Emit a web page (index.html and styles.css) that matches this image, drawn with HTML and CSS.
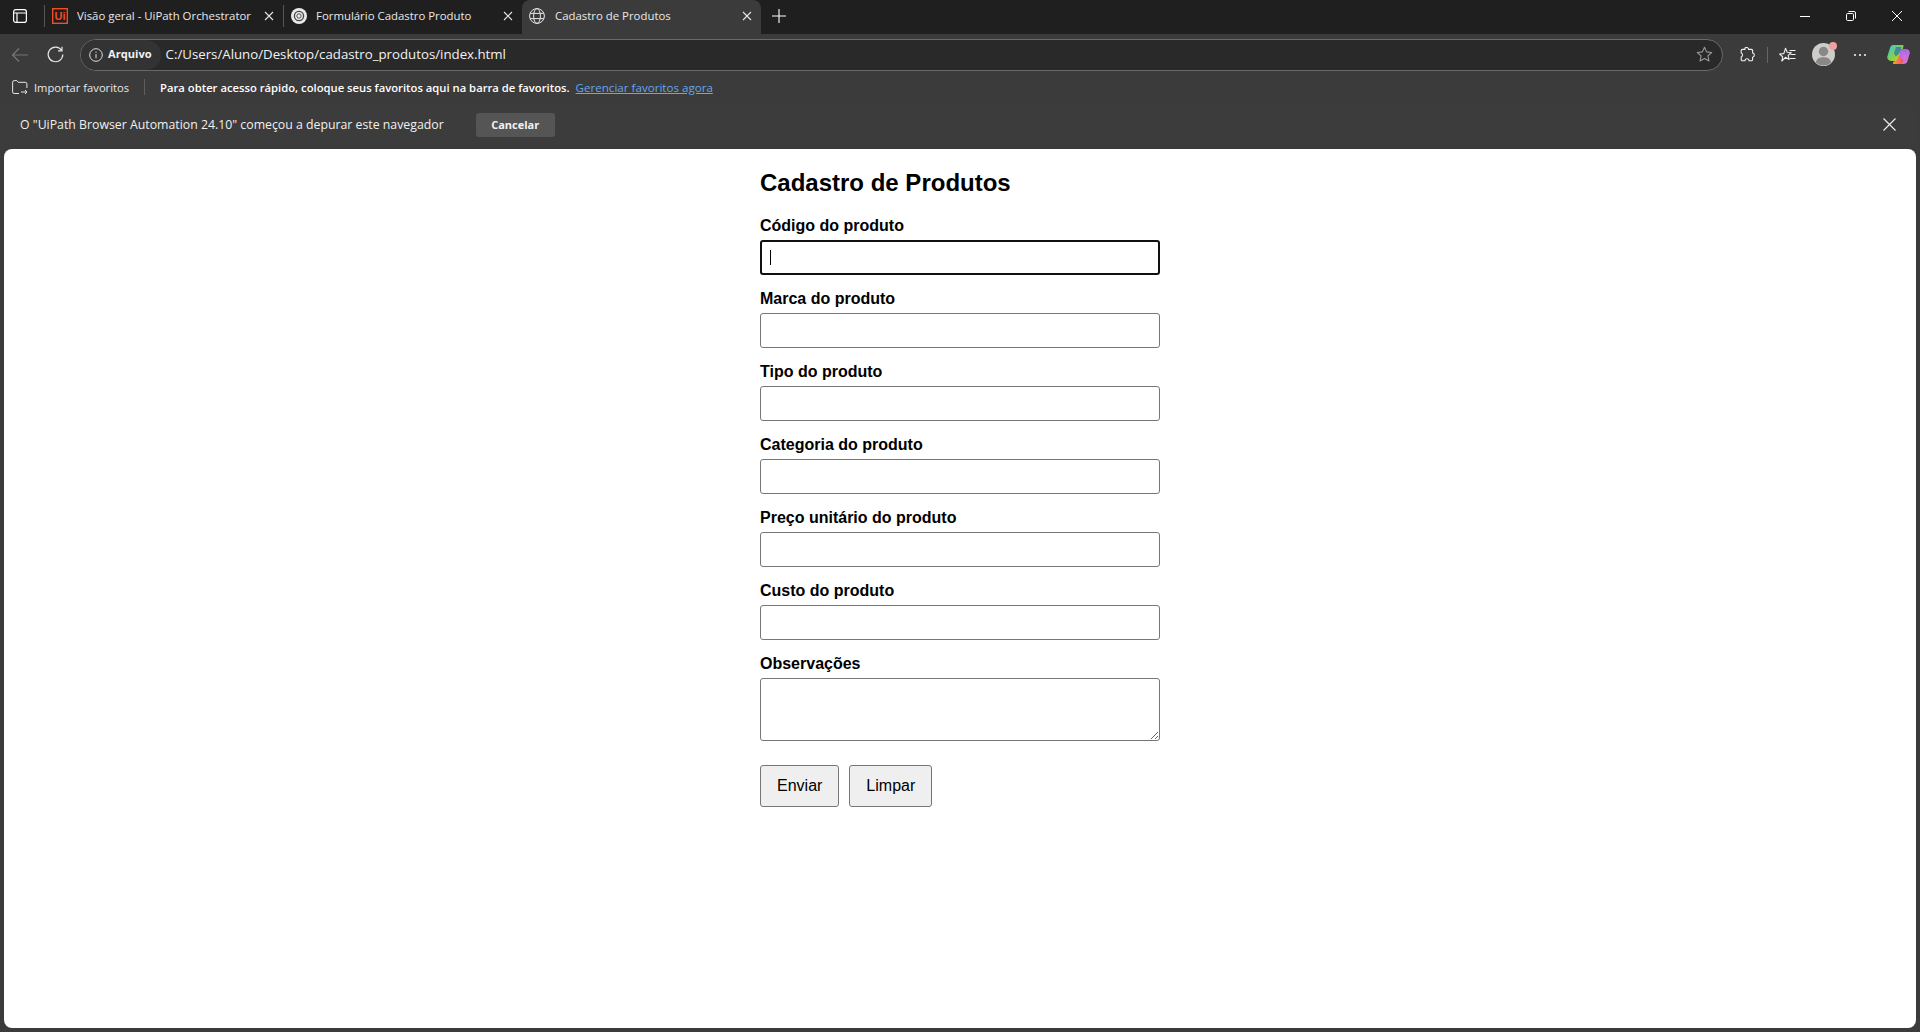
FILE: index.html
```html
<!DOCTYPE html>
<html lang="pt-BR">
<head>
<meta charset="utf-8">
<title>Cadastro de Produtos</title>
<link rel="stylesheet" href="styles.css">
</head>
<body>
<div class="window">
  <header class="tabstrip">
    <div class="strip-btn">
      <svg width="16" height="16" viewBox="0 0 16 16" fill="none" stroke="#fff" stroke-width="1.2"><rect x="1.6" y="1.6" width="12.8" height="12.8" rx="2.2"/><path d="M1.6 5h12.8M5 5v9.4" /></svg>
    </div>
    <div class="tab sep">
      <svg class="fav" width="16" height="16" viewBox="0 0 16 16"><rect x=".7" y=".7" width="14.6" height="14.6" fill="none" stroke="#f04e23" stroke-width="1.4"/><text class="ui-mark" x="8" y="12" text-anchor="middle">Ui</text></svg>
      <span class="tab-title">Visão geral - UiPath Orchestrator</span>
      <svg class="tab-x" width="10" height="10" viewBox="0 0 10 10" stroke="#e6e6e6" stroke-width="1.1"><path d="M1 1l8 8M9 1l-8 8"/></svg>
    </div>
    <div class="tab sep">
      <svg class="fav" width="16" height="16" viewBox="0 0 16 16"><circle cx="8" cy="8" r="8" fill="#e9e9e9"/><circle cx="8" cy="8" r="4.6" fill="none" stroke="#444" stroke-width="1.3"/><circle cx="8" cy="8" r="2.2" fill="none" stroke="#555" stroke-width="1"/></svg>
      <span class="tab-title">Formulário Cadastro Produto</span>
      <svg class="tab-x" width="10" height="10" viewBox="0 0 10 10" stroke="#e6e6e6" stroke-width="1.1"><path d="M1 1l8 8M9 1l-8 8"/></svg>
    </div>
    <div class="tab active">
      <svg class="fav" width="16" height="16" viewBox="0 0 16 16" fill="none" stroke="#e6e6e6" stroke-width="1"><circle cx="8" cy="8" r="7.4"/><ellipse cx="8" cy="8" rx="3.4" ry="7.4"/><path d="M1.2 5.4h13.6M1.2 10.6h13.6"/></svg>
      <span class="tab-title">Cadastro de Produtos</span>
      <svg class="tab-x" width="10" height="10" viewBox="0 0 10 10" stroke="#e6e6e6" stroke-width="1.1"><path d="M1 1l8 8M9 1l-8 8"/></svg>
    </div>
    <div class="new-tab">
      <svg width="14" height="14" viewBox="0 0 14 14" stroke="#fff" stroke-width="1.1"><path d="M7 0v14M0 7h14"/></svg>
    </div>
    <div class="win-controls">
      <svg width="10" height="10" viewBox="0 0 10 10" stroke="#fff" stroke-width="1"><path d="M0 5.5h10"/></svg>
      <svg width="10" height="10" viewBox="0 0 10 10" fill="none" stroke="#fff" stroke-width="1"><rect x=".5" y="2.5" width="7" height="7" rx="1.2"/><path d="M2.5 .5h5.5a1.5 1.5 0 0 1 1.5 1.5v5.5"/></svg>
      <svg width="10" height="10" viewBox="0 0 10 10" stroke="#fff" stroke-width="1"><path d="M0 0l10 10M10 0L0 10"/></svg>
    </div>
  </header>

  <nav class="toolbar">
    <div class="nav-btn back">
      <svg width="18" height="16" viewBox="0 0 18 16" fill="none" stroke="#777" stroke-width="1.2"><path d="M17 8H1.5M8 1.5L1.5 8 8 14.5"/></svg>
    </div>
    <div class="nav-btn reload">
      <svg width="17" height="17" viewBox="0 0 17 17" fill="none" stroke="#e8e8e8" stroke-width="1.2"><path d="M14.6 4.4A7.3 7.3 0 1 0 15.8 8.5"/><path d="M15 .8v4h-4"/></svg>
    </div>
    <div class="address">
      <div class="site-chip">
        <svg width="14" height="14" viewBox="0 0 14 14" fill="none" stroke="#ddd" stroke-width="1"><circle cx="7" cy="7" r="6.3"/><path d="M7 6v4.2M7 3.600v1.200"/></svg>
        <span class="chip-text">Arquivo</span>
      </div>
      <span class="url">C:/Users/Aluno/Desktop/cadastro_produtos/index.html</span>
      <svg class="addr-star" width="17" height="17" viewBox="0 0 17 17" fill="none" stroke="#9a9a9a" stroke-width="1.1" stroke-linejoin="round"><path d="M8.5 1.2l2.1 4.7 5.1.6-3.8 3.4 1.1 5.1-4.5-2.6L4 15l1.1-5.1L1.3 6.500l5.100-.6z"/></svg>
    </div>
    <div class="tool-icons">
      <svg class="ti-ext" width="16" height="16" viewBox="0 0 16 16" fill="none" stroke="#f0f0f0" stroke-width="1.1" stroke-linejoin="round"><path d="M6 1.200a2 2 0 0 1 3.600 1.200h2.800a1.200 1.200 0 0 1 1.200 1.200v2.300a2.200 2.200 0 0 1 0 4.300v2.400a1.200 1.200 0 0 1-1.200 1.200H10a2 2 0 0 0-4 0H3.400a1.200 1.200 0 0 1-1.200-1.200v-2.700a2 2 0 0 0 0-3.800V3.600A1.200 1.200 0 0 1 3.400 2.400H6z"/></svg>
      <span class="ti-sep"></span>
      <svg class="ti-fav" width="17" height="16" viewBox="0 0 17 16" fill="none" stroke="#f0f0f0" stroke-width="1.1" stroke-linejoin="round"><path d="M6.500 1.300l1.700 3.900 4 .3-3 2.800.9 4.200-3.600-2.200L2.800 14l.9-4.200L.6 7l4.200-.4z"/><path d="M10.500 3.500h6M11.500 7.500h5M10.800 11.500h5.700"/></svg>
      <div class="avatar">
        <svg width="23" height="23" viewBox="0 0 23 23"><circle cx="11.500" cy="11.500" r="11.500" fill="#cfcdca"/><circle cx="11.500" cy="8.500" r="4.700" fill="#8a8886"/><path d="M3.800 19.500c1-4 4-5.200 7.700-5.200s6.700 1.200 7.700 5.200a11.500 11.500 0 0 1-15.400 0z" fill="#8a8886"/></svg>
        <span class="avatar-dot"></span>
      </div>
      <svg class="ti-more" width="14" height="4" viewBox="0 0 14 4" fill="#eee"><circle cx="2" cy="2" r="1.100"/><circle cx="7" cy="2" r="1.100"/><circle cx="12" cy="2" r="1.100"/></svg>
      <svg class="ti-copilot" width="23" height="21" viewBox="0 0 23 21">
        <defs>
          <linearGradient id="cpa" x1="0" y1="0" x2="1" y2="1"><stop offset="0" stop-color="#2fc4e8"/><stop offset=".55" stop-color="#86d24a"/><stop offset="1" stop-color="#f5c02c"/></linearGradient>
          <linearGradient id="cpb" x1="0" y1="0" x2="1" y2="1"><stop offset="0" stop-color="#7a6cf0"/><stop offset=".6" stop-color="#c86be0"/><stop offset="1" stop-color="#f083b8"/></linearGradient>
          <linearGradient id="cpc" x1="0" y1="0" x2="1" y2="0"><stop offset="0" stop-color="#f9a52c"/><stop offset="1" stop-color="#ee4d6a"/></linearGradient>
        </defs>
        <path d="M6 1h9.500c1.500 0 1 1.500.5 3L13 15c-.5 1.500-1.500 2-3 2H4.500C1.500 17-.5 14.500.5 12L3 4c.5-2 1.500-3 3-3z" fill="url(#cpa)"/>
        <path d="M13 5h5.500c3 0 5 2 4 5l-2 7c-.5 2-2 3-4 3h-3c2 0 2.500-1 3-3l1-4c.5-3-1-5-4.500-8z" fill="url(#cpb)"/>
        <path d="M13.500 5.500c2.500 1 5 2.500 5 5.500 0 2-1 5-2 7.500-.5 1-1.500 1.500-2.500 1.500H7c-1.500 0-1-1.500 0-2 3 0 4-1 4.500-3z" fill="url(#cpb)"/>
        <path d="M11.800 12c-.5 3-2.300 5-5.300 5.800-.8.700-.5 2.200.5 2.200h6.500c1 0 1.500-.5 2-1.500.5-1 1-2.500 1-2.500z" fill="url(#cpc)"/>
        <path d="M9 3h5.500l-1 3.500C12 10 11 11 8.500 12.500L7 9z" fill="#1d4fc0" opacity=".55"/>
      </svg>
    </div>
  </nav>

  <div class="favbar">
    <svg class="fav-import" width="16" height="15" viewBox="0 0 16 15" fill="none" stroke="#e6e6e6" stroke-width="1"><path d="M7 13.500H2.200a1.600 1.600 0 0 1-1.600-1.600V2.200A1.600 1.600 0 0 1 2.200.6h2.600l1.500 1.700h7a1.600 1.600 0 0 1 1.600 1.600V8"/><path d="M9 12h6M13 10l2 2-2 2"/></svg>
    <span class="fav-import-text">Importar favoritos</span>
    <span class="fav-sep"></span>
    <strong class="fav-msg">Para obter acesso rápido, coloque seus favoritos aqui na barra de favoritos.</strong>
    <a class="fav-link" href="#">Gerenciar favoritos agora</a>
  </div>

  <div class="infobar">
    <span class="info-msg">O "UiPath Browser Automation 24.10" começou a depurar este navegador</span>
    <button class="info-cancel" type="button">Cancelar</button>
    <svg class="info-x" width="13" height="13" viewBox="0 0 13 13" stroke="#f0f0f0" stroke-width="1.100"><path d="M.5.500l12 12M12.500.500l-12 12"/></svg>
  </div>

  <main class="page">
    <form class="form">
      <h1>Cadastro de Produtos</h1>
      <label class="field-label">Código do produto</label>
      <div class="focus-wrap">
        <input class="field focused" type="text">
        <span class="caret"></span>
      </div>
      <label class="field-label">Marca do produto</label>
      <input class="field" type="text">
      <label class="field-label">Tipo do produto</label>
      <input class="field" type="text">
      <label class="field-label">Categoria do produto</label>
      <input class="field" type="text">
      <label class="field-label">Preço unitário do produto</label>
      <input class="field" type="text">
      <label class="field-label">Custo do produto</label>
      <input class="field" type="text">
      <label class="field-label">Observações</label>
      <textarea class="field area"></textarea>
      <div class="actions">
        <button class="btn" type="button">Enviar</button>
        <button class="btn" type="button">Limpar</button>
      </div>
    </form>
  </main>
</div>
</body>
</html>
```

FILE: styles.css
```css
* { box-sizing: border-box; }
html, body { margin: 0; height: 100%; }
body {
  background: #3b3b3b;
  font-family: "Open Sans", "Noto Sans", "Liberation Sans", sans-serif;
  color: #fff;
  overflow: hidden;
}
.window { height: 1032px; display: flex; flex-direction: column; }

/* Tab strip */
.tabstrip { height: 34px; background: #1f1f1f; display: flex; align-items: stretch; flex: none; }
.strip-btn { width: 44px; display: flex; align-items: center; justify-content: center; padding-right: 5px; padding-bottom: 2px; }
.tab { width: 239px; display: flex; align-items: center; padding: 0 7px 0 7px; position: relative; font-size: 12px; color: #e8e8e8; }
.tab.sep { border-left: 1px solid #555; margin: 5px 0; height: 22px; align-self: flex-start; }
.tab.active { background: #3b3b3b; border-radius: 8px 8px 0 0; margin-top: 0; padding-left: 7px; padding-bottom: 2px; }
.fav { flex: none; }
.ui-mark { font: 700 11px "Liberation Sans", Arial, sans-serif; fill: #f04e23; }
.tab-title { margin-left: 9px; flex: 1; white-space: nowrap; overflow: hidden; font-size: 11.400px; padding-bottom: 1px; }
.tab.active .tab-title { margin-left: 10px; }
.tab-x { flex: none; margin-right: 2px; }
.new-tab { width: 34px; display: flex; align-items: center; justify-content: center; padding-left: 1px; padding-bottom: 2px; }
.win-controls { margin-left: auto; display: flex; align-items: center; gap: 36px; padding: 0 18px 2px 0; }

/* Toolbar */
.toolbar { height: 38px; flex: none; display: flex; align-items: center; padding-top: 3px; }
.nav-btn { display: flex; align-items: center; justify-content: center; flex: none; }
.back { width: 40px; }
.reload { width: 32px; margin-left: -1px; }
.address {
  margin-left: 9px; width: 1643px; height: 32px; flex: none;
  background: #292929; border: 1px solid #6a6a6a; border-radius: 16px;
  display: flex; align-items: center; font-size: 13px; padding-right: 9px;
}
.site-chip {
  height: 30px; border-radius: 15px; background: #333; display: flex; align-items: center;
  gap: 5px; padding: 0 9px 0 8px; font-size: 11.100px; font-weight: 700; color: #f2f2f2; flex: none;
}
.site-chip svg { flex: none; }
.chip-text { padding-bottom: 2px; }
.url { margin-left: 5px; flex: 1; font-size: 13.250px; color: #f2f2f2; white-space: nowrap; padding-bottom: 2px; }
.addr-star { flex: none; }
.tool-icons { flex: 1; display: flex; align-items: center; min-width: 0; }
.ti-ext { margin-left: 16px; flex: none; }
.ti-sep { width: 1px; height: 16px; background: #666; margin-left: 12px; flex: none; }
.ti-fav { margin-left: 11px; flex: none; }
.avatar { position: relative; margin-left: 16px; width: 23px; height: 23px; flex: none; }
.avatar svg { display: block; }
.avatar-dot { position: absolute; top: -1px; right: -2px; width: 8px; height: 8px; border-radius: 50%; background: #f0a0a0; }
.ti-more { margin-left: 18px; flex: none; }
.ti-copilot { margin-left: 20px; flex: none; }

/* Favorites bar */
.favbar { height: 32px; flex: none; display: flex; align-items: center; padding: 0 0 2px 12px; font-size: 11.200px; color: #e8e8e8; }
.fav-import { flex: none; }
.fav-import-text { margin-left: 6px; }
.fav-sep { width: 1px; height: 16px; background: #5e5e5e; margin: 0 15px 0 15px; }
.fav-msg { font-weight: 600; color: #fff; font-size: 11.250px; }
.fav-link { margin-left: 6px; color: #66a7ea; text-decoration: underline; font-size: 11.600px; }

/* Infobar */
.infobar {
  height: 42px; flex: none; margin-right: 4px; display: flex; align-items: center;
  padding: 0 20px 2px 20px; font-size: 12.300px; color: #f0f0f0; background: #3c3c3c;
  border-radius: 0 8px 8px 0;
}
.info-msg { white-space: nowrap; }
.info-cancel {
  margin: 2px 0 0 32px; width: 79px; height: 24px; border: 0; border-radius: 3px;
  background: #555; color: #f2f2f2; font: 700 11px "Open Sans", "Noto Sans", sans-serif; padding: 0 0 2px;
}
.info-x { margin-left: auto; flex: none; }

/* Page */
.page {
  flex: 1; margin: 3px 4px 4px; background: #fff; border-radius: 8px; min-height: 0;
  font-family: "Liberation Sans", Arial, sans-serif; color: #000;
}
.form { width: 400px; margin: 0 auto; display: flex; flex-direction: column; padding-top: 20px; }
.form h1 { margin: 0 0 20px; font-size: 24px; line-height: 28px; font-weight: 700; }
.field-label { display: block; font-size: 16px; line-height: 18px; font-weight: 700; margin-bottom: 5px; color: #000; }
.field {
  display: block; width: 400px; height: 35px; margin: 0 0 15px; padding: 8px; background: #fff;
  border: 1px solid #767676; border-radius: 3px; font: 16px "Liberation Sans", Arial, sans-serif; outline: none;
}
.field.focused { border: 2px solid #101010; }
.focus-wrap { position: relative; }
.caret { position: absolute; left: 10px; top: 10px; width: 1px; height: 15px; background: #000; }
.area { height: 63px; margin-bottom: 24px; resize: vertical; }
.actions { display: flex; gap: 10px; }
.btn {
  height: 42px; padding: 0 16px; font: 16px "Liberation Sans", Arial, sans-serif; color: #000;
  background: #efefef; border: 1px solid #767676; border-radius: 3px;
}
```
